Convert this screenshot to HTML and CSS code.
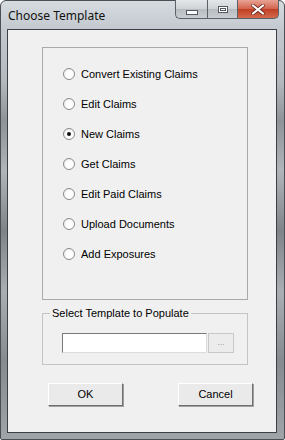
FILE: index.html
```html
<!DOCTYPE html>
<html lang="en">

<head>
    <meta charset="UTF-8">
    <title>Choose Template</title>
    <link rel="stylesheet" href="styles.css">
</head>

<body>
    <div class="window">
        <div class="titlebar">
            <span class="title">Choose Template</span>
            <div class="caption-buttons">
                <div class="cap cap-min"><span class="min-glyph"></span></div>
                <div class="cap cap-max"><span class="max-glyph"></span></div>
                <div class="cap cap-close">
                    <svg width="14" height="11" viewBox="0 0 14 11">
                        <path d="M2 1.5 L12 9.5 M12 1.5 L2 9.5" stroke="#6a2a20" stroke-width="3.6" stroke-linecap="round" />
                        <path d="M2 1.5 L12 9.5 M12 1.5 L2 9.5" stroke="#ffffff" stroke-width="2.2" stroke-linecap="round" />
                    </svg>
                </div>
            </div>
        </div>

        <div class="client">
            <!-- Template type -->
            <div class="group options">
                <label class="option"><span class="radio"></span>Convert Existing Claims</label>
                <label class="option"><span class="radio"></span>Edit Claims</label>
                <label class="option"><span class="radio checked"></span>New Claims</label>
                <label class="option"><span class="radio"></span>Get Claims</label>
                <label class="option"><span class="radio"></span>Edit Paid Claims</label>
                <label class="option"><span class="radio"></span>Upload Documents</label>
                <label class="option"><span class="radio"></span>Add Exposures</label>
            </div>

            <!-- Template file -->
            <fieldset class="group populate">
                <legend>Select Template to Populate</legend>
                <div class="file-row">
                    <div class="file-box"></div>
                    <div class="browse">...</div>
                </div>
            </fieldset>

            <div class="actions">
                <div class="btn">OK</div>
                <div class="btn">Cancel</div>
            </div>
        </div>
    </div>
</body>

</html>
```

FILE: styles.css
```css
body {
    margin: 0;
    font-family: "Liberation Sans", Arial, sans-serif;
    font-size: 11px;
    color: #000;
}

.window {
    width: 285px;
    height: 440px;
    box-sizing: border-box;
    padding: 0 7px 6px 6px;
    border: 1px solid #4a4f55;
    border-radius: 6px 6px 2px 2px;
    background: linear-gradient(180deg, #d6dbe0 0px, #c3c9cf 28px, #b4b9be 80px, #8e9398 120px, #b0b5ba 170px, #7f8489 230px, #a9aeb3 290px, #868b90 360px, #a0a5aa 440px);
    display: flex;
    flex-direction: column;
}

.titlebar {
    height: 28px;
    display: flex;
    justify-content: space-between;
    align-items: flex-start;
}

.title {
    font-family: "Noto Sans", "Open Sans", sans-serif;
    font-size: 12px;
    line-height: 29px;
    padding-left: 1px;
    color: #111;
}

.caption-buttons {
    display: flex;
    margin-right: -2px;
    margin-top: -1px;
}

.cap {
    height: 19px;
    box-sizing: border-box;
    border: 1px solid #5b6168;
    border-top: none;
    display: flex;
    align-items: center;
    justify-content: center;
}

.cap-min {
    width: 32px;
    border-radius: 0 0 0 5px;
    border-right: none;
    background: linear-gradient(180deg, #e4e7ea 0%, #cdd1d5 50%, #b7bcc1 51%, #c9cdd1 100%);
}

.cap-max {
    width: 30px;
    border-right: none;
    background: linear-gradient(180deg, #e4e7ea 0%, #cdd1d5 50%, #b7bcc1 51%, #c9cdd1 100%);
}

.cap-close {
    width: 42px;
    border-radius: 0 0 5px 0;
    background: linear-gradient(180deg, #e8a393 0%, #d2624c 50%, #c13f24 51%, #d26a4c 100%);
}

.min-glyph {
    width: 10px;
    height: 3px;
    margin-top: 6px;
    background: #fff;
    border: 1px solid #555a60;
}

.max-glyph {
    width: 8px;
    height: 5px;
    border: 1px solid #555a60;
    box-shadow: inset 0 0 0 1px #fff, inset 0 0 0 2px #555a60;
    background: #fff;
}

.client {
    flex: 1;
    background: #f0f0f0;
    border: 1px solid #3c4046;
    display: flex;
    flex-direction: column;
    padding: 17px 0 0 34px;
}

.group {
    width: 206px;
    box-sizing: border-box;
    border: 1px solid #a9a9a9;
}

.options {
    height: 253px;
    padding: 11px 0 0 20px;
    display: flex;
    flex-direction: column;
}

.option {
    height: 30px;
    display: flex;
    align-items: center;
    gap: 6px;
}

.radio {
    width: 12px;
    height: 12px;
    box-sizing: border-box;
    border-radius: 50%;
    border: 1px solid #8a8a8a;
    background: radial-gradient(circle at 60% 60%, #ffffff 40%, #e2e2e2 100%);
    display: flex;
    align-items: center;
    justify-content: center;
}

.radio.checked::after {
    content: "";
    width: 4px;
    height: 4px;
    border-radius: 50%;
    background: #111;
}

.populate {
    margin: 7px 0 0;
    height: 58px;
    padding: 0;
    border-color: #c4c4c4;
}

.populate legend {
    padding: 0 2px;
    margin-left: 7px;
    font-size: 11px;
    line-height: 13px;
}

.file-row {
    display: flex;
    margin: 13px 0 0 19px;
}

.file-box {
    width: 145px;
    height: 20px;
    box-sizing: border-box;
    background: #fff;
    border: 1px solid #dcdcdc;
    border-top-color: #7a7a7a;
    border-left-color: #7a7a7a;
}

.browse {
    width: 26px;
    height: 20px;
    box-sizing: border-box;
    margin-left: 1px;
    border: 1px solid #c8c8c8;
    background: #ececec;
    color: #9a9a9a;
    font-size: 9px;
    text-align: center;
    line-height: 16px;
}

.actions {
    display: flex;
    justify-content: space-between;
    width: 205px;
    margin: 18px 0 0 6px;
}

.btn {
    width: 75px;
    height: 23px;
    box-sizing: border-box;
    border: 1px solid #fff;
    border-right-color: #6f6f6f;
    border-bottom-color: #6f6f6f;
    box-shadow: 1px 1px 0 #a0a0a0;
    background: #eaeaea;
    text-align: center;
    line-height: 21px;
    font-size: 11px;
}
```
